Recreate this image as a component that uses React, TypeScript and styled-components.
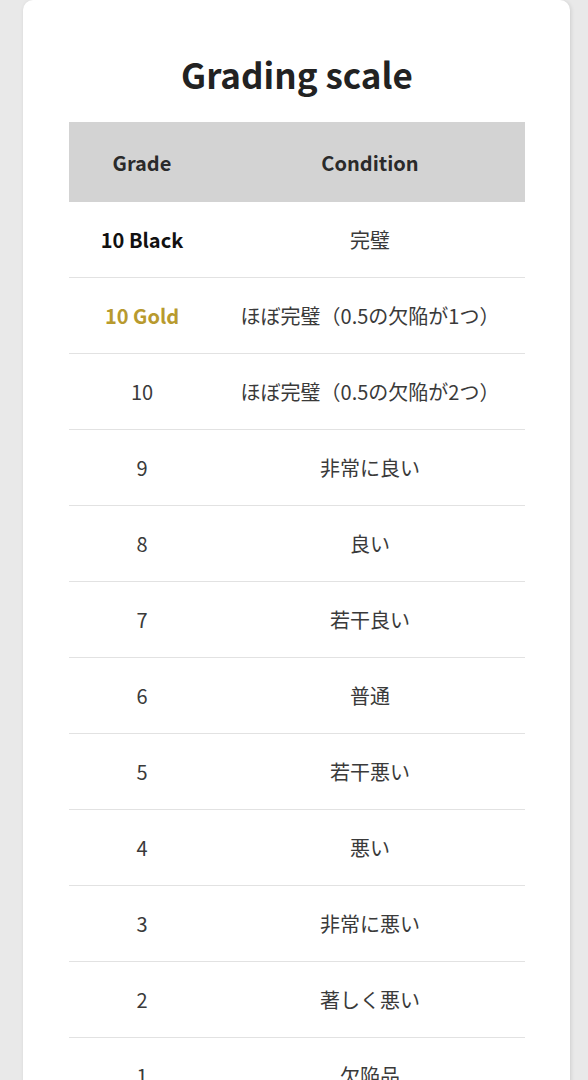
import React from "react";
import styled, { createGlobalStyle } from "styled-components";

const GlobalStyle = createGlobalStyle`
  body {
    margin: 0;
    background: #e9e9e9;
    font-family: "Noto Sans CJK JP", "Noto Sans", sans-serif;
    color: #333;
  }
`;

type Row = { grade: string; condition: string; tone?: "black" | "gold" };

const rows: Row[] = [
  { grade: "10 Black", condition: "完璧", tone: "black" },
  { grade: "10 Gold", condition: "ほぼ完璧（0.5の欠陥が1つ）", tone: "gold" },
  { grade: "10", condition: "ほぼ完璧（0.5の欠陥が2つ）" },
  { grade: "9", condition: "非常に良い" },
  { grade: "8", condition: "良い" },
  { grade: "7", condition: "若干良い" },
  { grade: "6", condition: "普通" },
  { grade: "5", condition: "若干悪い" },
  { grade: "4", condition: "悪い" },
  { grade: "3", condition: "非常に悪い" },
  { grade: "2", condition: "著しく悪い" },
  { grade: "1", condition: "欠陥品" },
];

export default function App() {
  return (
    <>
      <GlobalStyle />
      <Card>
        <Title>Grading scale</Title>
        <ScaleTable>
          <thead>
            <tr>
              <HeadCell $w={146}>Grade</HeadCell>
              <HeadCell>Condition</HeadCell>
            </tr>
          </thead>
          <tbody>
            {rows.map((r) => (
              <BodyRow key={r.grade}>
                <GradeCell $tone={r.tone}>{r.grade}</GradeCell>
                <Cell>{r.condition}</Cell>
              </BodyRow>
            ))}
          </tbody>
        </ScaleTable>
      </Card>
    </>
  );
}

const Card = styled.div`
  margin-left: 23px;
  width: 547px;
  box-sizing: border-box;
  background: #fff;
  border-radius: 10px;
  box-shadow: 1px 1px 4px rgba(0, 0, 0, 0.12);
  padding: 50px 45px 40px 46px;
`;

const Title = styled.h1`
  margin: 0 0 24px;
  text-align: center;
  font-size: 35px;
  line-height: 48px;
  font-weight: 700;
  color: #222;
`;

const ScaleTable = styled.table`
  width: 100%;
  border-collapse: collapse;
  table-layout: fixed;
`;

const HeadCell = styled.th<{ $w?: number }>`
  ${(p) => (p.$w ? `width: ${p.$w}px;` : "")}
  height: 80px;
  padding: 0;
  background: #d3d3d3;
  font-size: 20px;
  font-weight: 600;
  color: #2a2a2a;
  text-align: center;
`;

const BodyRow = styled.tr`
  border-bottom: 1px solid #e2e2e2;
`;

const Cell = styled.td`
  height: 75px;
  padding: 0;
  text-align: center;
  font-size: 20px;
  color: #3a3a3a;
`;

const GradeCell = styled(Cell)<{ $tone?: "black" | "gold" }>`
  font-weight: ${(p) => (p.$tone ? 700 : 400)};
  color: ${(p) => (p.$tone === "gold" ? "#b89a2e" : p.$tone === "black" ? "#111" : "#3a3a3a")};
`;
